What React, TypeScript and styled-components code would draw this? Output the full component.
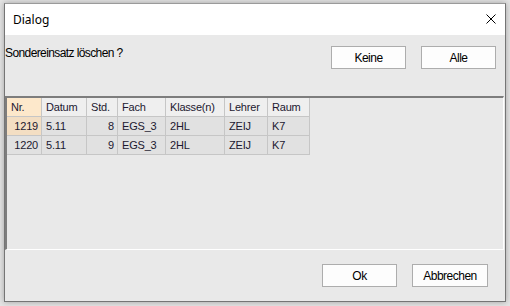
import React from 'react'
import styled, { createGlobalStyle } from 'styled-components'

const GlobalStyle = createGlobalStyle`
  html, body {
    margin: 0;
    padding: 0;
    background: #e4e4e4;
  }
  body {
    font-family: "Liberation Sans", Arial, sans-serif;
  }
`

const Screen = styled.div`
  width: 510px;
  height: 306px;
  padding: 3px 0 0 4px;
  box-sizing: border-box;
`

const Window = styled.div`
  width: 502px;
  height: 299px;
  box-sizing: border-box;
  border: 1px solid #757575;
  border-top-color: #9a9a9a;
  background: #e9e9e9;
  display: flex;
  flex-direction: column;
  box-shadow: 0 0 6px rgba(0, 0, 0, 0.3);
`

const TitleBar = styled.div`
  height: 30px;
  flex: none;
  background: #ffffff;
  display: flex;
  align-items: center;
  justify-content: space-between;
  padding: 0 9px 1px 8px;
  font-family: "Noto Sans", "Open Sans", sans-serif;
  font-size: 12px;
  color: #000;
`

const CloseIcon = styled.svg`
  width: 10px;
  height: 10px;
  display: block;
`

const TopSection = styled.div`
  height: 61px;
  flex: none;
  display: flex;
  justify-content: space-between;
  align-items: flex-start;
  padding: 0 9px 0 0;
`

const Question = styled.div`
  font-size: 12px;
  letter-spacing: -0.6px;
  color: #000;
  padding-top: 11px;
`

const ButtonRow = styled.div`
  display: flex;
  gap: 15px;
  padding-top: 11px;
`

const Button = styled.button<{ $w?: number }>`
  width: ${(p) => p.$w ?? 75}px;
  height: 23px;
  box-sizing: border-box;
  background: #fdfdfd;
  border: 1px solid #adadad;
  border-radius: 0;
  font-family: "Liberation Sans", Arial, sans-serif;
  font-size: 12px;
  letter-spacing: -0.5px;
  color: #000;
  padding: 0;
`

const GridBox = styled.div`
  height: 154px;
  flex: none;
  margin-right: 1px;
  box-sizing: border-box;
  border-top: 2px solid #7d7d7d;
  border-left: 2px solid #7d7d7d;
  border-bottom: 1px solid #ffffff;
  border-right: 1px solid #ffffff;
  background: #e9e9e9;
  overflow: hidden;
`

const Table = styled.table`
  border-collapse: separate;
  border-spacing: 0;
  table-layout: fixed;
  width: 303px;
  font-family: "Liberation Sans", Arial, sans-serif;
  font-size: 11px;
  letter-spacing: -0.2px;
  color: #1c1830;
`

const Col = styled.col<{ $w: number }>`
  width: ${(p) => p.$w}px;
`

const Cell = styled.td<{ $right?: boolean; $bg?: string }>`
  height: 19px;
  padding: 0 ${(p) => (p.$right ? '3px' : '2px')} 0 ${(p) => (p.$right ? '2px' : '4px')};
  box-sizing: border-box;
  border-right: 1px solid #c6c6c6;
  border-bottom: 1px solid #c6c6c6;
  background: ${(p) => p.$bg ?? '#e1e1e1'};
  text-align: ${(p) => (p.$right ? 'right' : 'left')};
  white-space: nowrap;
  overflow: hidden;
`

const HeadCell = styled(Cell).attrs({ as: 'th' })`
  font-weight: normal;
  text-align: left;
  background: ${(p) => p.$bg ?? '#efefef'};
`

const Footer = styled.div`
  flex: 1;
  display: flex;
  justify-content: flex-end;
  align-items: flex-start;
  gap: 15px;
  padding: 14px 17px 0 0;
`

const columns = [
  { title: 'Nr.', w: 35, right: true },
  { title: 'Datum', w: 45 },
  { title: 'Std.', w: 31, right: true },
  { title: 'Fach', w: 48 },
  { title: 'Klasse(n)', w: 59 },
  { title: 'Lehrer', w: 43 },
  { title: 'Raum', w: 42 },
]

const rows = [
  ['1219', '5.11', '8', 'EGS_3', '2HL', 'ZEIJ', 'K7'],
  ['1220', '5.11', '9', 'EGS_3', '2HL', 'ZEIJ', 'K7'],
]

const App: React.FC = () => {
  return (
    <Screen>
      <GlobalStyle />
      <Window>
        <TitleBar>
          <span>Dialog</span>
          <CloseIcon viewBox="0 0 10 10">
            <path d="M0.5 0.5 L9.5 9.5 M9.5 0.5 L0.5 9.5" stroke="#000" strokeWidth="1" />
          </CloseIcon>
        </TitleBar>
        <TopSection>
          <Question>Sondereinsatz löschen ?</Question>
          <ButtonRow>
            <Button>Keine</Button>
            <Button>Alle</Button>
          </ButtonRow>
        </TopSection>
        <GridBox>
          <Table>
            <colgroup>
              {columns.map((c) => (
                <Col key={c.title} $w={c.w} />
              ))}
            </colgroup>
            <thead>
              <tr>
                {columns.map((c, i) => (
                  <HeadCell key={c.title} $bg={i === 0 ? '#fde8cb' : undefined}>
                    {c.title}
                  </HeadCell>
                ))}
              </tr>
            </thead>
            <tbody>
              {rows.map((r, ri) => (
                <tr key={r[0]}>
                  {r.map((v, i) => (
                    <Cell
                      key={i}
                      $right={columns[i].right}
                      $bg={ri === 0 && i === 0 ? '#f3dec3' : undefined}
                    >
                      {v}
                    </Cell>
                  ))}
                </tr>
              ))}
            </tbody>
          </Table>
        </GridBox>
        <Footer>
          <Button $w={75}>Ok</Button>
          <Button $w={76}>Abbrechen</Button>
        </Footer>
      </Window>
    </Screen>
  )
}

export default App
